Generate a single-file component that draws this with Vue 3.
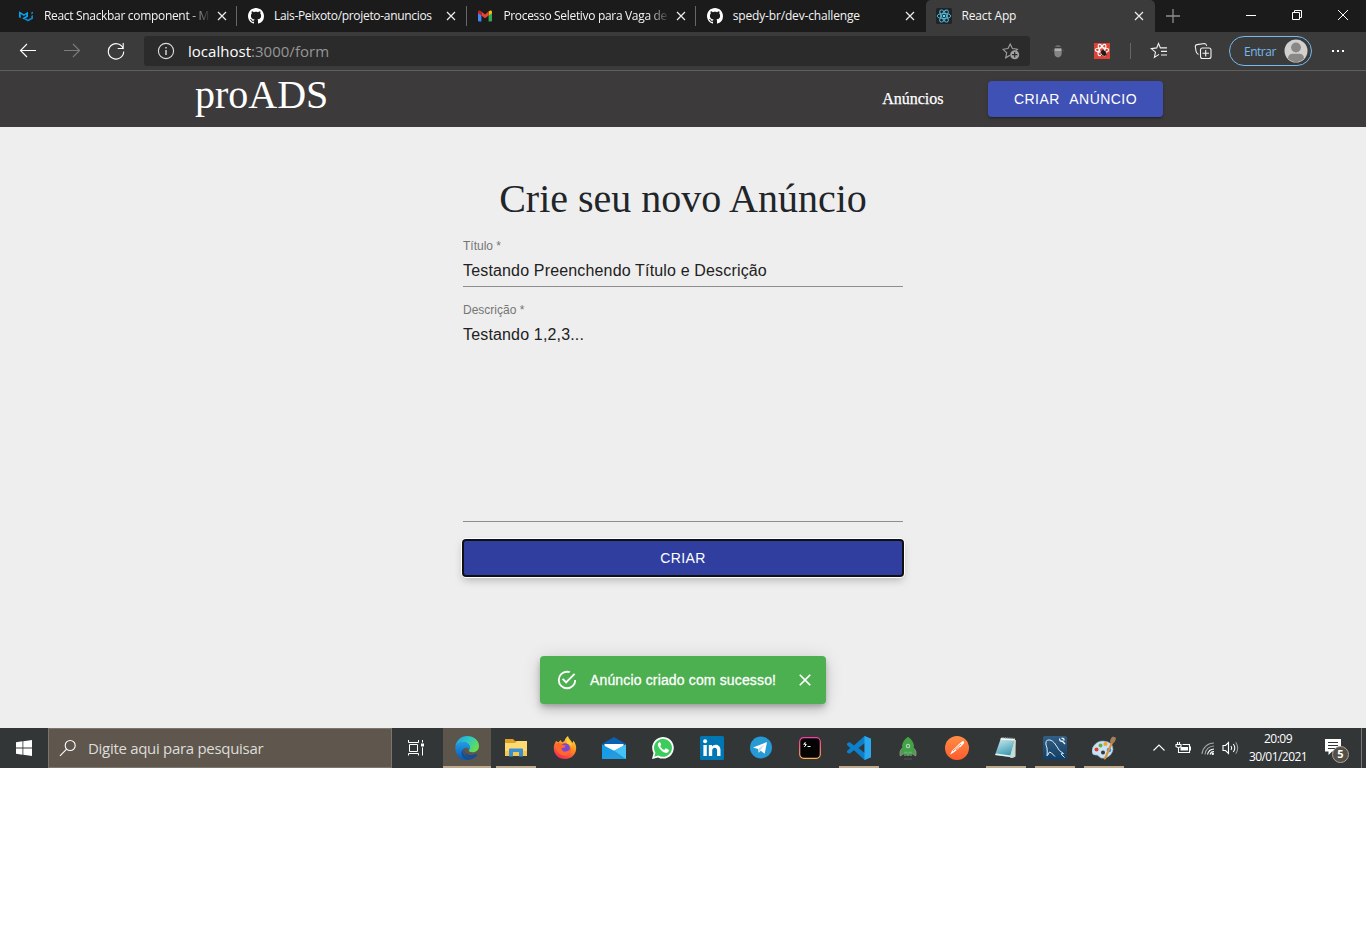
<script setup>
const tabs = [
  { icon: 'mui', title: 'React Snackbar component - M', cls: 'fade' },
  { icon: 'github', title: 'Lais-Peixoto/projeto-anuncios', cls: '' },
  { icon: 'gmail', title: 'Processo Seletivo para Vaga de', cls: 'fade' },
  { icon: 'github', title: 'spedy-br/dev-challenge', cls: 'loose' },
  { icon: 'react', title: 'React App', cls: 'loose', active: true },
]
const apps = [
  { id: 'edge', state: 'current' },
  { id: 'explorer', state: 'open' },
  { id: 'firefox' },
  { id: 'mail' },
  { id: 'whatsapp' },
  { id: 'linkedin' },
  { id: 'telegram' },
  { id: 'terminal' },
  { id: 'vscode', state: 'open' },
  { id: 'robo' },
  { id: 'postman' },
  { id: 'notepad', state: 'open' },
  { id: 'workbench', state: 'open' },
  { id: 'paint', state: 'open' },
]
</script>

<template>
  <div class="screen">
    <div class="tabstrip">
      <div v-for="(t, i) in tabs" :key="i" class="tab" :class="{ active: t.active, sep: i < 3 }">
        <svg v-if="t.icon === 'mui'" class="fav" viewBox="0 0 16 16">
          <path d="M1 9.2V3.3l5 2.9 4-2.4v5l-4.2 2.5-1.6-1 4-2.3V6.3L6 7.9 2.7 6v4.2z" fill="#0aa4ee" />
          <path d="M6 11.3l4 2.3 5-2.9V7l-1.8 1v1.7L10 11.6l-2.2-1.3zM13.2 4.6L15 3.5v2L13.2 6.6z" fill="#1580c4" />
        </svg>
        <svg v-else-if="t.icon === 'github'" class="fav" viewBox="0 0 16 16">
          <path fill="#fff" d="M8 0C3.58 0 0 3.58 0 8c0 3.54 2.29 6.53 5.47 7.59.4.07.55-.17.55-.38 0-.19-.01-.82-.01-1.49-2.01.37-2.53-.49-2.69-.94-.09-.23-.48-.94-.82-1.13-.28-.15-.68-.52-.01-.53.63-.01 1.08.58 1.23.82.72 1.21 1.87.87 2.33.66.07-.52.28-.87.51-1.07-1.78-.2-3.64-.89-3.64-3.95 0-.87.31-1.59.82-2.15-.08-.2-.36-1.02.08-2.12 0 0 .67-.21 2.2.82.64-.18 1.32-.27 2-.27s1.36.09 2 .27c1.53-1.04 2.2-.82 2.2-.82.44 1.1.16 1.92.08 2.12.51.56.82 1.27.82 2.15 0 3.07-1.87 3.75-3.65 3.95.29.25.54.73.54 1.48 0 1.07-.01 1.93-.01 2.2 0 .21.15.46.55.38A8.01 8.01 0 0 0 16 8c0-4.42-3.58-8-8-8z" />
        </svg>
        <svg v-else-if="t.icon === 'gmail'" class="fav" viewBox="0 0 16 16">
          <path d="M1 4v8.5q0 1 1 1h2.4V6.8z" fill="#4285f4" />
          <path d="M11.6 6.8v6.7H14q1 0 1-1V4z" fill="#34a853" />
          <path d="M11.6 3.6v4L15 5.2V4q0-1.6-1.8-1.4z" fill="#fbbc04" />
          <path d="M4.4 3.6L8 6.4l3.6-2.8v4L8 10.3 4.4 7.6z" fill="#ea4335" />
          <path d="M1 4v1.2l3.4 2.4v-4L3 2.6Q1 2.2 1 4z" fill="#c5221f" />
        </svg>
        <svg v-else class="fav" viewBox="0 0 16 16">
          <rect width="16" height="16" rx="1.5" fill="#20232a" />
          <g fill="none" stroke="#61dafb" stroke-width=".9" opacity=".85">
            <ellipse cx="8" cy="8" rx="6.8" ry="2.6" />
            <ellipse cx="8" cy="8" rx="6.8" ry="2.6" transform="rotate(60 8 8)" />
            <ellipse cx="8" cy="8" rx="6.8" ry="2.6" transform="rotate(120 8 8)" />
          </g>
          <circle cx="8" cy="8" r="1.3" fill="#61dafb" />
        </svg>
        <span class="tabtitle" :class="t.cls">{{ t.title }}</span>
        <svg class="tabclose" viewBox="0 0 10 10"><path d="M1 1l8 8M9 1L1 9" /></svg>
      </div>
      <svg class="newtab" viewBox="0 0 14 14"><path d="M7 0v14M0 7h14" stroke="#8e8e8e" stroke-width="1.3" /></svg>
      <div class="winbtns">
        <svg viewBox="0 0 12 12"><path d="M1 6.5h10" /></svg>
        <svg viewBox="0 0 12 12"><path d="M1.5 3.5h7v7h-7zM3.5 3.5v-2h7v7h-2" /></svg>
        <svg viewBox="0 0 12 12"><path d="M1 1l10 10M11 1L1 11" /></svg>
      </div>
    </div>

    <div class="toolbar">
      <svg class="nav back" viewBox="0 0 18 18"><path d="M17 8.5H1.500M8 2L1.500 8.500 8 15" /></svg>
      <svg class="nav fwd" viewBox="0 0 18 18"><path d="M1 8.500h15.500M10 2l6.500 6.500L10 15" /></svg>
      <svg class="nav reload" viewBox="0 0 18 18"><path d="M16.400 7.200A7.700 7.700 0 1 0 16.700 9.500M16.200 1v5.500h-5.500" /></svg>
      <div class="address">
        <svg class="info" viewBox="0 0 18 18"><circle cx="9" cy="9" r="7.600" /><path d="M9 8v5M9 5v1.600" stroke-width="1.400" /></svg>
        <span class="url"><b>localhost</b>:3000/form</span>
        <svg class="staradd" viewBox="0 0 18 18">
          <path d="M8 13.200l-4.300 2.600 1-5L1 7.300l5-.7L8.200 2l2.200 4.600 5 .7-1.500 1.400" fill="none" stroke="#a0a0a0" stroke-width="1.100" />
          <circle cx="12.700" cy="12.700" r="4.500" fill="#a0a0a0" />
          <path d="M12.700 10v5.400M10 12.700h5.400" stroke="#2b2b2b" stroke-width="1.200" />
        </svg>
      </div>
      <svg class="ext ghost" viewBox="0 0 16 16">
        <path d="M4.800 4Q8 0 11.200 4z" fill="#6d6d6d" />
        <path d="M4.300 5.500h7.400v4q0 4.500-3.700 5-3.700-.5-3.700-5z" fill="#858585" />
        <path d="M4.800 5.500h6.400v2.500H4.800z" fill="#b0b0b0" />
        <path d="M2.800 6.500v2M13.200 6.500v2" stroke="#555" />
      </svg>
      <svg class="ext bug" viewBox="0 0 16 16">
        <rect width="16" height="16" fill="#dc4437" />
        <g fill="none" stroke="#fff" stroke-width="1.100"><ellipse cx="8" cy="7" rx="6.700" ry="2.300" /><ellipse cx="8" cy="7" rx="6.300" ry="2.400" transform="rotate(60 8 7)" /><ellipse cx="8" cy="7" rx="6.300" ry="2.400" transform="rotate(120 8 7)" /></g>
        <ellipse cx="9.700" cy="10" rx="2.300" ry="3.100" transform="rotate(-35 9.700 10)" fill="#24191b" />
        <path d="M6 9l7 3M7 13l5-5.500M9 7l2 6" stroke="#24191b" stroke-width=".8" />
      </svg>
      <i class="divider"></i>
      <svg class="line favs" viewBox="0 0 18 18"><path d="M9 12.400l-4.600 3 1.100-5.200L1.300 6.600l5.400-.7L8.500 1.500l1.900 4.400H17M11 9.400h6M11 13h6" /></svg>
      <svg class="line colls" viewBox="0 0 18 18"><path d="M8.500 6H15q2 0 2 2v6.500q0 2-2 2H8.500q-2 0-2-2V8q0-2 2-2zM11.700 8v6.500M8.500 11.300H15M4.500 12.500Q2.300 11.500 2 9L1.300 4.500Q1.200 3 3 2.600L10.500 1.500q1.700 0 2.200 2.500" /></svg>
      <div class="signin"><span>Entrar</span>
        <svg viewBox="0 0 24 24"><circle cx="12" cy="12" r="11.500" fill="#d2d0ce" /><circle cx="12" cy="8.500" r="4.900" fill="#8a8886" /><path d="M4 19.800Q4 14.700 9 14.700h6q5 0 5 5.100-8 7.200-16 0z" fill="#8a8886" /></svg>
      </div>
      <div class="dots"><i></i><i></i><i></i></div>
    </div>

    <header class="appbar">
      <span class="brand">proADS</span>
      <a class="link">Anúncios</a>
      <button class="create">CRIAR ANÚNCIO</button>
    </header>

    <main class="page">
      <h1>Crie seu novo Anúncio</h1>
      <div class="field">
        <label>Título *</label>
        <div class="value">Testando Preenchendo Título e Descrição</div>
      </div>
      <div class="field tall">
        <label>Descrição *</label>
        <div class="value">Testando 1,2,3...</div>
      </div>
      <button class="submit">CRIAR</button>
      <div class="snack">
        <svg class="ok" viewBox="0 0 24 24"><path fill="#fff" d="M20 12a8 8 0 0 1-8 8 8 8 0 0 1-8-8 8 8 0 0 1 8-8c.76 0 1.500.11 2.200.31l1.570-1.570A9.822 9.822 0 0 0 12 2 10 10 0 0 0 2 12a10 10 0 0 0 10 10 10 10 0 0 0 10-10h-2M7.910 10.080L6.500 11.500 11 16 21 6l-1.410-1.420L11 13.170l-3.090-3.090z" /></svg>
        <span>Anúncio criado com sucesso!</span>
        <svg class="dismiss" viewBox="0 0 24 24"><path fill="#fff" d="M19 6.410L17.590 5 12 10.590 6.410 5 5 6.410 10.590 12 5 17.590 6.410 19 12 13.410 17.590 19 19 17.590 13.410 12z" /></svg>
      </div>
    </main>

    <footer class="taskbar">
      <div class="start"><svg viewBox="0 0 16 16"><path fill="#fff" d="M0 2.200L6.500 1.300v6.200H0zM7.300 1.200L16 0v7.500H7.300zM0 8.400h6.500v6.300L0 13.800zM7.300 8.400H16V16l-8.700-1.200z" /></svg></div>
      <div class="search">
        <svg viewBox="0 0 18 18"><circle cx="11.200" cy="6.500" r="5" /><path d="M7.600 10.200L1 16.800" /></svg>
        <span>Digite aqui para pesquisar</span>
      </div>
      <div class="taskview"><svg viewBox="0 0 18 18"><path d="M1.500 1v2.500h10V1M1.500 16.500V14.500h10v2M2.500 5.500h8v7h-8zM15.500 1v2.500M15.500 8.500v8" fill="none" stroke="#fff" stroke-width="1" /><path d="M14 4.500h3v3h-3z" fill="#fff" /></svg></div>

      <div v-for="a in apps" :key="a.id" class="app" :class="a.state">
        <svg viewBox="0 0 24 24">
          <defs>
            <linearGradient id="eg1" x1="0" y1="0" x2="1" y2=".5"><stop stop-color="#1b9de2" /><stop offset=".55" stop-color="#2fc8c4" /><stop offset="1" stop-color="#64dd52" /></linearGradient>
            <linearGradient id="eg2" x1="0" y1="0" x2="0" y2="1"><stop stop-color="#239be8" /><stop offset="1" stop-color="#0b59b1" /></linearGradient>
            <linearGradient id="ff" x1=".8" y1="0" x2=".3" y2="1"><stop stop-color="#ffe244" /><stop offset=".45" stop-color="#ff9020" /><stop offset="1" stop-color="#f72359" /></linearGradient>
            <linearGradient id="tm" x1="0" y1="0" x2="0" y2="1"><stop stop-color="#ff3ba6" /><stop offset="1" stop-color="#ffb052" /></linearGradient>
            <linearGradient id="pm" x1="0" y1="0" x2="0" y2="1"><stop stop-color="#ff8e45" /><stop offset="1" stop-color="#ff5b2d" /></linearGradient>
            <linearGradient id="np" x1="0" y1="0" x2=".4" y2="1"><stop stop-color="#d7f2f5" /><stop offset="1" stop-color="#3d9bb2" /></linearGradient>
            <linearGradient id="wb" x1="0" y1="0" x2="0" y2="1"><stop stop-color="#315e83" /><stop offset="1" stop-color="#123e65" /></linearGradient>
          </defs>
          <g v-if="a.id === 'edge'">
            <path d="M.3 11C1 4.500 6 0 12.200 0 19 0 24 4.500 24 10c0 4-3 6.300-6.500 6.300-3 0-4.300-1.300-3.500-2.500 1.500-2.300.5-6-3.500-7.300C6.500 5.400 1.500 7 .3 11z" fill="url(#eg1)" />
            <path d="M.3 11C1.300 7.500 4.500 6 7.700 6c4.200 0 7.300 2.400 7.300 5.700 0 1.300-.6 1.800-1 2.400-1-2.400-3.500-3-5-1.500-2.500 2.500-.5 8.500 5 10.900C6 26 .1 19 .3 11z" fill="url(#eg2)" />
            <path d="M9 12.600c-3 3.400.5 9 7.300 9 2.300 0 4.400-.7 5.800-2.500-2.600 4-7 5.400-10.600 4.500C6.500 22 4.500 16 9 12.600z" fill="#124e96" />
            <path d="M9 12.600c-1 5 5 8.500 12.300 5.500q1.500-.5.800 1C19 24 8 22.500 9 12.600z" fill="#124e96" />
          </g>
          <g v-else-if="a.id === 'explorer'">
            <path d="M1 3h8l2 2h12v5H1z" fill="#dfa027" />
            <path d="M1 7h10l2-2h10v15H1z" fill="#ffda70" />
            <path d="M1 15h22v5H1z" fill="#f5c650" />
            <path d="M5 13.500Q5 12.500 6 12.500h12q1 0 1 1V20.500h-4v-4.500H9v4.500H5z" fill="#398fd3" />
          </g>
          <g v-else-if="a.id === 'firefox'">
            <path d="M3 5l2.500 1.200L7.500 4l1.600 2.300Q12 5.500 12 3.500 13 1 15 0c.5 3 3.200 3.800 4.300 7l1.200-2.200C22.500 7.400 23.300 10 23.200 12.700 22.700 19 18 23 12 23 5 23 .7 18 .8 11.700.9 8.500 2 7 3 5z" fill="url(#ff)" />
            <circle cx="12" cy="12.200" r="5" fill="#7947d5" />
            <path d="M3 8q3-2 5.500 0 1 1.500 4.500 1.500-1 2.500-4.500 2.700Q9 16 13 15.500q3.500-.5 4.500-4 1.500 3.500-1.500 6.300-5 3.500-9.500 0Q2.500 14 3 8z" fill="#ff682d" />
            <path d="M13.500 3q4.700 2.200 5.600 8.300-2-3.500-5.200-3.800z" fill="#ffd640" />
          </g>
          <g v-else-if="a.id === 'mail'">
            <path d="M0 8L12 1l12 7v3H0z" fill="#0a62b3" />
            <path d="M2.500 8h19v7h-19z" fill="#fff" />
            <path d="M0 8.500l12 6.200 12-6.200V23H0z" fill="#159de8" />
            <path d="M12 14.700l12-6.200V23z" fill="#43c4f4" />
            <path d="M0 23l12-8.300L18 19v4z" fill="#249bdd" />
          </g>
          <g v-else-if="a.id === 'whatsapp'">
            <path d="M1 23l1.500-6A10.800 10.800 0 1 1 7 21.400z" fill="#fff" />
            <path d="M3.300 20.700l1.100-4A9 9 0 1 1 7.400 19.600z" fill="#3dcc5c" />
            <path d="M8.500 6.200C6 7 6.500 10 9 13c3 3.500 6 4.800 8 3.200 1-.8 1-2 .7-2.400l-3-1.500-1.400 1.600q-2.600-.9-4.100-3.700l1-1.600-1.100-2.400z" fill="#fff" />
          </g>
          <g v-else-if="a.id === 'linkedin'">
            <rect width="24" height="24" rx="1.500" fill="#0077b5" />
            <circle cx="5.100" cy="5.300" r="2" fill="#fff" />
            <path d="M3.400 9h3.400v11H3.400zM8.800 9H12v1.600C14 7.300 20.500 8 20.500 14v6h-3.400v-5.500c0-4-4.900-3.600-4.900 0V20H8.800z" fill="#fff" />
          </g>
          <g v-else-if="a.id === 'telegram'">
            <circle cx="12" cy="11.500" r="11" fill="#259ad4" />
            <path d="M4 11.600L18 6l-2.300 11.800-4-3-2 2-.6-3.700z" fill="#fff" /><path d="M9.500 13l6-4.600-4.500 6-1.100 2.300z" fill="#b7d9ec" />
          </g>
          <g v-else-if="a.id === 'terminal'">
            <rect x="1.700" y="1.700" width="20.600" height="20.600" rx="4" fill="#050405" stroke="url(#tm)" stroke-width="1.200" />
            <path d="M5.500 8.500L7.200 6.500l-.5 2h1.600L6.300 11M9.500 10.500h3" stroke="#fff" stroke-width="1" fill="none" />
          </g>
          <g v-else-if="a.id === 'vscode'">
            <path d="M17.500 0L24 2.700v18.600L17.500 24 7 14.300l-4.500 3.500L0 16.500v-1.600l3.200-2.900L0 9V7.400l2.500-1.300L7 9.600zM17.800 7L11.500 12l6.300 5z" fill="#0d80cc" />
            <path d="M17.500 0L24 2.700v18.600L17.500 24z" fill="#2ba9ef" />
          </g>
          <g v-else-if="a.id === 'robo'">
            <path d="M6.500 12q-3.500 2.500-2.300 8l4.800-3h6l4.800 3q1.200-5.500-2.300-8z" fill="#4b9c52" stroke="#b09a8b" stroke-width=".7" />
            <path d="M12 .8q5.500 4 6 9Q17.500 15 15 17.500H9Q6.500 15 6 9.800 6.500 4.800 12 .8z" fill="#43a447" />
            <circle cx="12" cy="10" r="2.200" fill="#aed8b2" /><circle cx="12" cy="10" r=".9" fill="#317b41" />
            <path d="M9 20v-3.500h2V19h2v-2.500h2V20" fill="none" stroke="#63b36a" stroke-width="1.300" /><path d="M8 23h8" stroke="#555" />
          </g>
          <g v-else-if="a.id === 'postman'">
            <circle cx="12" cy="12" r="12" fill="url(#pm)" />
            <path d="M5 18.800l2-4L14 8l3-2.500q1.200-1 2 .2.500 1-.4 2L15 11.500l-6 4.700z" fill="#fff" /><path d="M8 15l8-7M11 14l4-3" stroke="#f36b39" stroke-width=".8" />
          </g>
          <g v-else-if="a.id === 'notepad'">
            <path d="M8 3l14 1-1 17-4 1-6-4z" fill="#d5cfaa" />
            <path d="M7 2l14 1-5 18-15-2z" fill="url(#np)" /><path d="M7 2l14 1-.4 1.500L6.300 3.700z" fill="#f3f7f6" />
            <path d="M1 19l15 2 .5-1.600L2 17.500z" fill="#e9f5f3" /><path d="M16 21l5-17 .5 16.500-3.500 1.500z" fill="#c4ddd8" />
            <path d="M7.500 1.600L21 2.600" stroke="#a3a3a3" stroke-width="1.300" stroke-dasharray="1 .8" />
          </g>
          <g v-else-if="a.id === 'workbench'">
            <rect width="24" height="24" rx="2" fill="url(#wb)" />
            <path d="M4 20Q4.500 16 4 12 1.500 6 4.500 4q5-1 9 6 2.500 5.500 7 7.500l-2.500.4 3.500 3.600M4.500 19.500l2-3.500 2 1 3.500 3.500" fill="none" stroke="#e0edf5" stroke-width="1" />
            <path d="M16.500 2.500q0 3 3 2.700L22 8M18.500 2.200q3 0 2.400 2.500" stroke="#eef5fa" stroke-width="1.300" fill="none" />
          </g>
          <g v-else>
            <path d="M11 5C5 5 0 10 0 15q0 4 3 4 3-.5 4 1.500 1.500 2.500 6 1.500 7-2 8-8.500Q21 5.500 11 5z" fill="#c9e3f4" stroke="#8baecd" stroke-width=".6" />
            <circle cx="4.500" cy="13.500" r="2" fill="#dc3b32" /><circle cx="8.500" cy="9.500" r="2" fill="#64af38" /><circle cx="13.500" cy="8" r="2.100" fill="#f3a32d" /><circle cx="11" cy="16.500" r="2" fill="#33383a" /><circle cx="17" cy="14" r="2.300" fill="#3c89dc" />
            <path d="M19 6l2 1-7 16-2 .7.400-2.500z" fill="#d9943f" /><path d="M18 6.300Q18 2 21 .5l3 1.300q-.5 4.500-3.500 6z" fill="#a77e56" />
          </g>
        </svg>
      </div>

      <div class="tray">
        <svg class="chev" viewBox="0 0 12 12"><path d="M.5 8.500L6 3l5.500 5.500" /></svg>
        <svg class="batt" viewBox="0 0 16 14"><path d="M2.500 1v2M4.500 1v2M1 3.500h5v2q-2.500 2-5 0zM3.500 7v4.500h11v-8H7.500M15.500 5.500v4" /><path d="M5.500 6h7.500v3.500H5.500z" fill="#fff" stroke="none" /></svg>
        <svg class="wifi" viewBox="0 0 14 14"><g opacity=".55"><path d="M1 13A12 12 0 0 1 13 2M4 13.500A9 9 0 0 1 13 5" /></g><path d="M6.500 13.500A7 7 0 0 1 13 8M9 13.500A4 4 0 0 1 13 10.500" /><circle cx="11.800" cy="12.700" r="1.200" fill="#fff" stroke="none" /></svg>
        <svg class="vol" viewBox="0 0 17 14"><path d="M1 4.500h2.500l3-3v11l-3-3H1zM9 5q1.500 2 0 4M11.300 3q3 4 0 8" /><path d="M13.700 1.300q4 5.700 0 11.400" opacity=".5" /></svg>
        <div class="clock"><span>20:09</span><span class="date">30/01/2021</span></div>
        <div class="notes"><svg viewBox="0 0 16 16"><path d="M0 0h16v12.500H7L3.500 16v-3.500H0z" fill="#fff" /><path d="M3 3.500h10M3 6.500h10M3 9.500h7" stroke="#323637" stroke-width="1.200" /></svg><b>5</b></div>
      </div>
    </footer>
  </div>
</template>

<style>
html, body { margin: 0; background: #fff; }
</style>
<style scoped>
.screen { width: 1366px; height: 768px; overflow: hidden; display: flex; flex-direction: column; background: #eee; font-family: "Open Sans", "Noto Sans", sans-serif; }
.screen * { box-sizing: border-box; }
svg { display: block; flex: none; }
button { border: 0; margin: 0; }
.tabstrip { height: 32px; flex: none; background: #1b1b1b; display: flex; align-items: center; padding-left: 8px; }
.tab { width: 229.4px; height: 32px; flex: none; display: flex; align-items: center; padding: 0 11px 0 10px; position: relative; color: #f4f4f4; font-size: 12px; }
.tab:nth-child(2) .fav, .tab:nth-child(3) .fav, .tab:nth-child(4) .fav { margin-left: .6px; }
.sep::after { content: ""; position: absolute; right: 0; top: 6px; width: 1px; height: 20px; background: #666; }
.active { background: #3b3b3b; border-radius: 5px 5px 0 0; }
.fav { width: 16px; height: 16px; margin-right: 10px; }
.tabtitle { width: 166px; flex: none; white-space: nowrap; line-height: 18px; letter-spacing: -.32px; }
.loose { letter-spacing: -.17px; }
.fade { -webkit-mask-image: linear-gradient(90deg, #000 145px, transparent 167px); mask-image: linear-gradient(90deg, #000 145px, transparent 167px); }
.tabclose { width: 10px; height: 10px; margin-left: 6.500px; }
.tabclose path { stroke: #ededed; stroke-width: 1.2; }
.newtab { width: 14px; height: 14px; margin-left: 11px; }
.winbtns { margin-left: auto; display: flex; gap: 34px; padding-right: 17px; margin-bottom: 3px; }
.winbtns svg { width: 12px; height: 12px; }
.winbtns path { stroke: #fff; fill: none; stroke-width: 1; }
.toolbar { height: 39px; flex: none; background: #3b3b3b; border-bottom: 1px solid #5f5f5f; display: flex; align-items: center; padding-left: 19px; }
.nav { width: 18px; height: 18px; margin-right: 26px; fill: none; stroke: #fff; stroke-width: 1.1; }
.fwd { stroke: #7c7c7c; }
.reload { margin-right: 19px; }
.address { width: 886px; height: 30px; background: #2b2b2b; border-radius: 3px; display: flex; align-items: center; padding: 0 10px 0 13px; flex: none; }
.info { width: 18px; height: 18px; fill: none; stroke: #ddd; stroke-width: 1.1; }
.url { margin-left: 13px; font-size: 15px; color: #969696; line-height: 20px; letter-spacing: .02px; }
.url b { font-weight: 400; color: #fff; }
.staradd { width: 18px; height: 18px; margin-left: auto; }
.ext { width: 16px; height: 16px; }
.ghost { margin-left: 20px; }
.bug { margin-left: 28px; }
.divider { width: 1px; height: 16px; background: #666; margin-left: 20px; }
.line { width: 18px; height: 18px; fill: none; stroke: #f2f2f2; stroke-width: 1.1; }
.favs { margin-left: 19px; }
.colls { margin-left: 26px; }
.signin { margin-left: 17px; width: 83px; height: 30px; border: 1px solid #76b9ed; border-radius: 15px; display: flex; align-items: center; padding-left: 14px; color: #76b9ed; font-size: 12px; flex: none; }
.signin span { width: 38px; letter-spacing: -.5px; }
.signin svg { width: 24px; height: 24px; margin-left: 2px; }
.dots { display: flex; gap: 3px; margin-left: 20px; }
.dots i { width: 2px; height: 2px; background: #fff; }
.appbar { height: 56px; flex: none; background: #3d3a3b; display: flex; align-items: center; padding: 0 203px 0 195px; font-family: "Liberation Serif", serif; color: #fff; }
.brand { font-size: 40px; line-height: 48px; margin-top: -9px; }
.link { margin-left: auto; font-size: 16px; -webkit-text-stroke: .25px #fff; }
.create { margin-left: 44.500px; width: 175px; height: 36px; padding: 0; border-radius: 4px; background: #3f51b5; color: #fff; font: 14px "Liberation Sans", sans-serif; letter-spacing: .45px; word-spacing: 6px; box-shadow: 0 3px 1px -2px rgba(0,0,0,.2), 0 2px 2px rgba(0,0,0,.14), 0 1px 5px rgba(0,0,0,.12); }
.page { height: 601px; flex: none; background: #eee; display: flex; flex-direction: column; align-items: center; padding-top: 48px; font-family: "Liberation Sans", sans-serif; }
h1 { margin: 0; font: 400 40px/48px "Liberation Serif", serif; color: #212529; }
.field { width: 440px; height: 48px; margin-top: 16px; border-bottom: 1px solid #8e8e8e; }
.tall { height: 219px; }
.field label { display: block; font-size: 12px; line-height: 14px; color: #757575; }
.field .value { font-size: 16px; line-height: 20px; margin-top: 8px; color: #212121; letter-spacing: .16px; }
.submit { width: 438px; height: 34px; margin-top: 19px; padding: 0; border-radius: 2px; background: #303f9f; color: #fff; font: 14px "Liberation Sans", sans-serif; letter-spacing: .4px; box-shadow: 0 0 0 2px #101010, 0 0 0 3px #fff, 0 4px 8px 1px rgba(0,0,0,.25); flex: none; }
.snack { width: 286px; height: 48px; margin-top: 81px; background: #4caf50; border-radius: 4px; color: #fff; display: flex; align-items: center; padding-left: 16px; box-shadow: 0 3px 5px -1px rgba(0,0,0,.2), 0 6px 10px rgba(0,0,0,.14), 0 1px 18px rgba(0,0,0,.12); font-size: 14px; flex: none; }
.snack span { width: 199px; margin-left: 12px; white-space: nowrap; -webkit-text-stroke: .3px #fff; letter-spacing: .15px; }
.ok { width: 22px; height: 22px; }
.dismiss { width: 20px; height: 20px; margin-left: 6px; }
.taskbar { height: 40px; flex: none; background: #323637; display: flex; align-items: center; }
.start { width: 48px; display: flex; justify-content: center; }
.start svg { width: 16px; height: 16px; }
.search { width: 344px; height: 40px; background: #5f574d; border: 1px solid #7c756c; display: flex; align-items: center; padding-left: 10px; color: #deddda; font-size: 15px; }
.search svg { width: 18px; height: 18px; fill: none; stroke: #fff; stroke-width: 1.1; }
.search span { margin-left: 11px; line-height: 22px; letter-spacing: -.3px; }
.taskview { width: 51px; padding-left: 15px; }
.taskview svg { width: 18px; height: 18px; }
.app { width: 48px; margin-right: 1px; height: 40px; position: relative; display: flex; align-items: center; justify-content: center; flex: none; }
.app svg { width: 24px; height: 24px; }
.current { background: #5b554b; }
.open::after, .current::after { content: ""; position: absolute; bottom: 0; left: 4px; width: 40px; height: 2px; background: #bda88c; }
.current::after { left: 0; width: 48px; }
.tray { flex: 1; display: flex; align-items: center; height: 40px; padding-left: 24px; position: relative; color: #fff; font-size: 12px; }
.tray::after { content: ""; position: absolute; right: 4px; top: 0; width: 1px; height: 40px; background: #777; }
.tray > svg { fill: none; stroke: #fff; stroke-width: 1.1; }
.chev { width: 12px; height: 12px; }
.batt { width: 16px; height: 14px; margin-left: 10px; }
.wifi { width: 14px; height: 14px; margin-left: 10px; }
.vol { width: 17px; height: 14px; margin-left: 7px; }
.clock { width: 60px; margin-left: 9px; display: flex; flex-direction: column; align-items: center; line-height: 18px; letter-spacing: -.5px; white-space: nowrap; }
.date { letter-spacing: -.55px; }
.notes { margin-left: 17px; position: relative; width: 24px; height: 18px; }
.notes svg { width: 16px; height: 16px; }
.notes b { position: absolute; left: 7px; top: 7px; width: 17px; height: 17px; border-radius: 50%; border: 1px solid #a9a49c; background: #554f46; font-size: 11px; line-height: 14px; text-align: center; }
</style>
